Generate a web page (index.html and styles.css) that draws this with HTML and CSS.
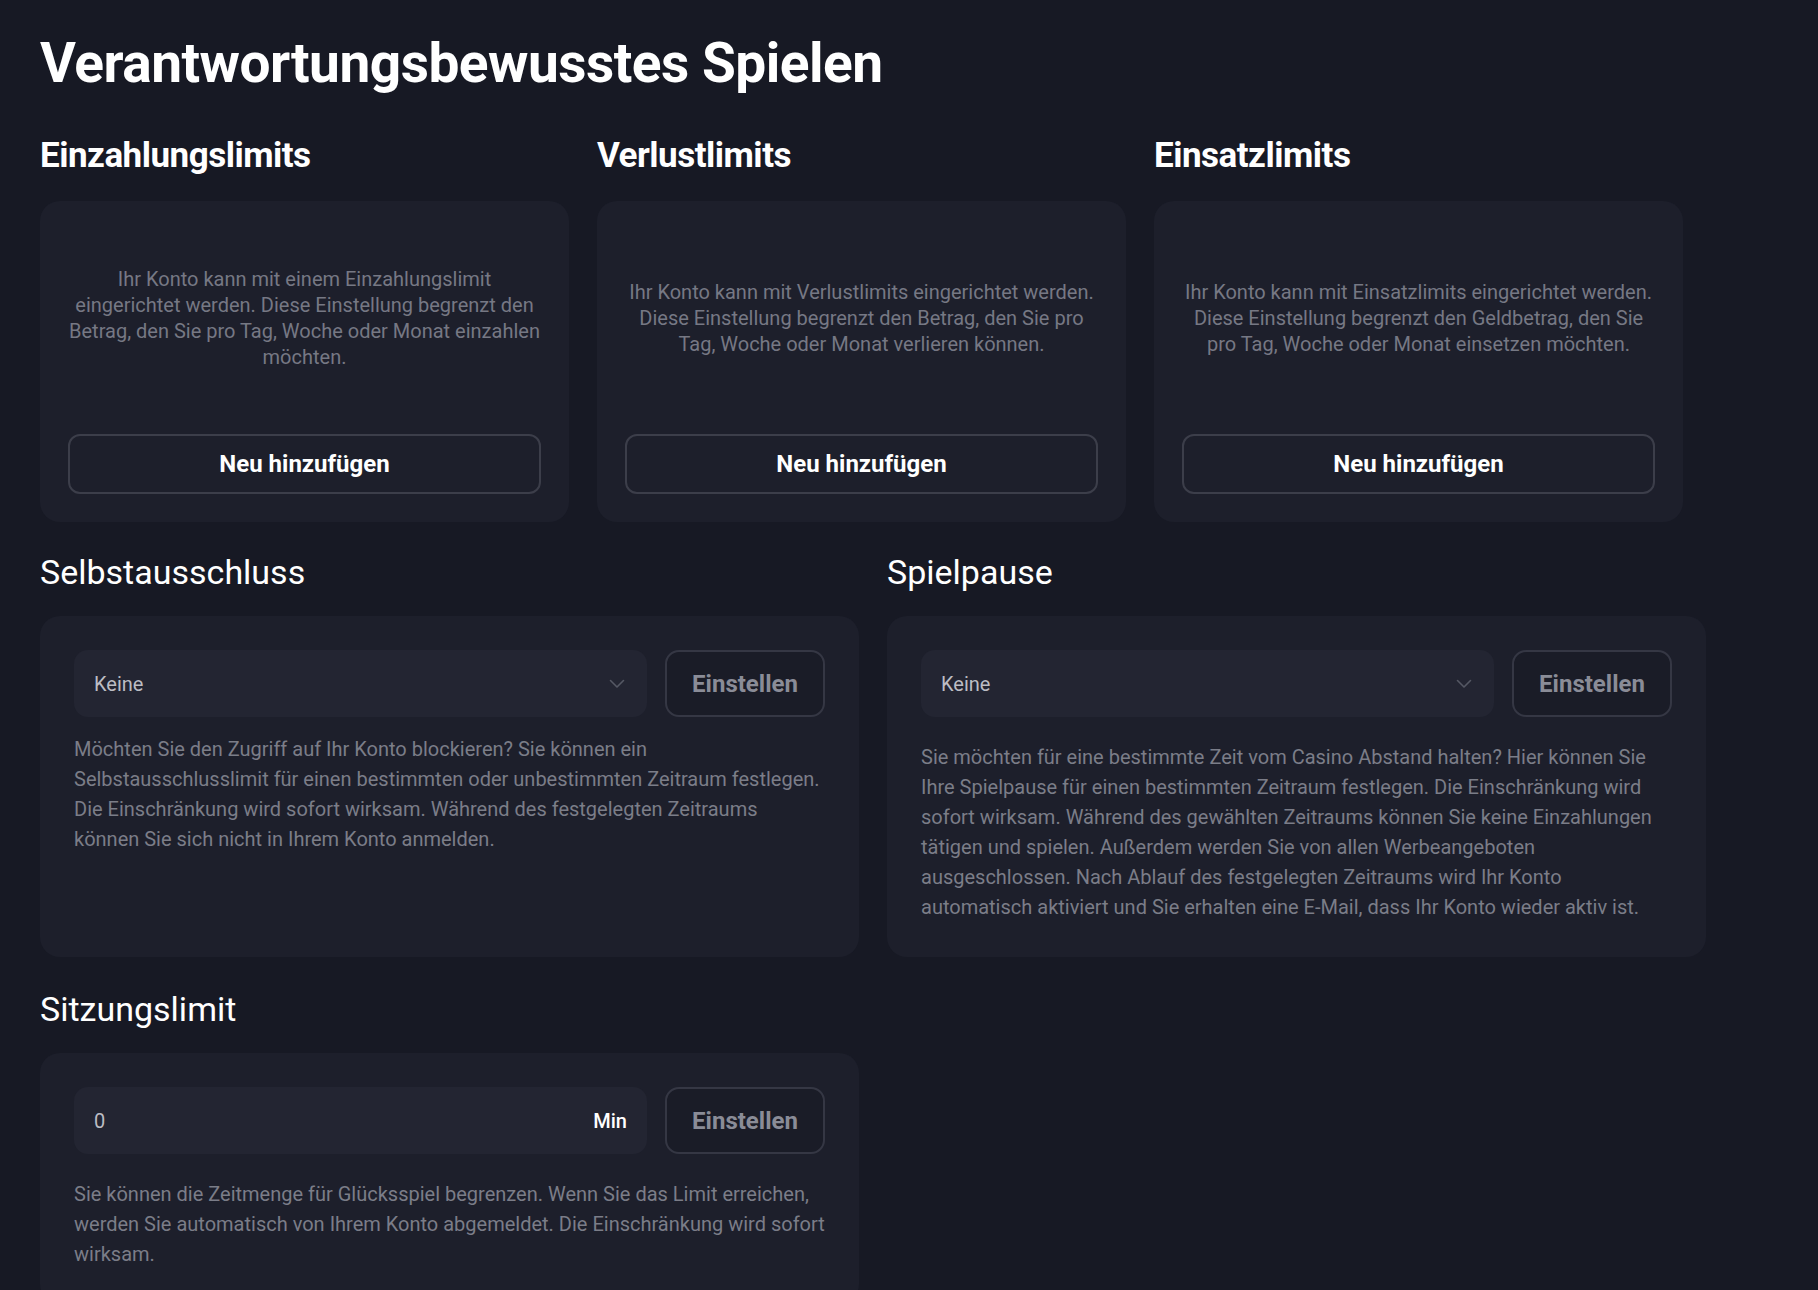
FILE: index.html
```html
<!DOCTYPE html>
<html lang="de">

<head>
    <meta charset="utf-8">
    <title>Verantwortungsbewusstes Spielen</title>
    <link rel="stylesheet" href="styles.css">
</head>

<body>
    <main class="page">
        <h1 class="page-title">Verantwortungsbewusstes Spielen</h1>

        <div class="limits-row">
            <section class="limit">
                <h2 class="limit-title">Einzahlungslimits</h2>
                <div class="limit-card">
                    <div class="limit-text">
                        <p>Ihr Konto kann mit einem Einzahlungslimit eingerichtet werden. Diese Einstellung begrenzt den Betrag, den Sie pro Tag, Woche oder Monat einzahlen möchten.</p>
                    </div>
                    <button class="btn-add">Neu hinzufügen</button>
                </div>
            </section>

            <section class="limit">
                <h2 class="limit-title">Verlustlimits</h2>
                <div class="limit-card">
                    <div class="limit-text">
                        <p>Ihr Konto kann mit Verlustlimits eingerichtet werden. Diese Einstellung begrenzt den Betrag, den Sie pro Tag, Woche oder Monat verlieren können.</p>
                    </div>
                    <button class="btn-add">Neu hinzufügen</button>
                </div>
            </section>

            <section class="limit">
                <h2 class="limit-title">Einsatzlimits</h2>
                <div class="limit-card">
                    <div class="limit-text">
                        <p>Ihr Konto kann mit Einsatzlimits eingerichtet werden. Diese Einstellung begrenzt den Geldbetrag, den Sie pro Tag, Woche oder Monat einsetzen möchten.</p>
                    </div>
                    <button class="btn-add">Neu hinzufügen</button>
                </div>
            </section>
        </div>

        <div class="settings-row">
            <section class="setting">
                <h2 class="setting-title">Selbstausschluss</h2>
                <div class="setting-card">
                    <div class="setting-controls">
                        <div class="field select">
                            <span class="field-value">Keine</span>
                            <svg class="chevron" width="16" height="10" viewBox="0 0 16 10">
                                <path d="M1.5 1.5 L8 8 L14.5 1.5" fill="none" stroke="#555864" stroke-width="1.6" stroke-linecap="round" stroke-linejoin="round"/>
                            </svg>
                        </div>
                        <button class="btn-set">Einstellen</button>
                    </div>
                    <p class="setting-text">Möchten Sie den Zugriff auf Ihr Konto blockieren? Sie können ein Selbstausschlusslimit für einen bestimmten oder unbestimmten Zeitraum festlegen. Die Einschränkung wird sofort wirksam. Während des festgelegten Zeitraums können Sie sich nicht in Ihrem Konto anmelden.</p>
                </div>
            </section>

            <section class="setting">
                <h2 class="setting-title">Spielpause</h2>
                <div class="setting-card">
                    <div class="setting-controls">
                        <div class="field select">
                            <span class="field-value">Keine</span>
                            <svg class="chevron" width="16" height="10" viewBox="0 0 16 10">
                                <path d="M1.5 1.5 L8 8 L14.5 1.5" fill="none" stroke="#555864" stroke-width="1.6" stroke-linecap="round" stroke-linejoin="round"/>
                            </svg>
                        </div>
                        <button class="btn-set">Einstellen</button>
                    </div>
                    <p class="setting-text spaced">Sie möchten für eine bestimmte Zeit vom Casino Abstand halten? Hier können Sie Ihre Spielpause für einen bestimmten Zeitraum festlegen. Die Einschränkung wird sofort wirksam. Während des gewählten Zeitraums können Sie keine Einzahlungen tätigen und spielen. Außerdem werden Sie von allen Werbeangeboten ausgeschlossen. Nach Ablauf des festgelegten Zeitraums wird Ihr Konto automatisch aktiviert und Sie erhalten eine E-Mail, dass Ihr Konto wieder aktiv ist.</p>
                </div>
            </section>
        </div>

        <div class="settings-row">
            <section class="setting">
                <h2 class="setting-title">Sitzungslimit</h2>
                <div class="setting-card">
                    <div class="setting-controls">
                        <div class="field">
                            <span class="field-value">0</span>
                            <span class="field-unit">Min</span>
                        </div>
                        <button class="btn-set">Einstellen</button>
                    </div>
                    <p class="setting-text spaced">Sie können die Zeitmenge für Glücksspiel begrenzen. Wenn Sie das Limit erreichen, werden Sie automatisch von Ihrem Konto abgemeldet. Die Einschränkung wird sofort wirksam.</p>
                </div>
            </section>
        </div>
    </main>
</body>
</html>
```

FILE: styles.css
```css
body {
    margin: 0;
    background-color: #171924;
    color: #fff;
    font-family: Roboto, "Noto Sans", sans-serif;
}

.page {
    width: 1666px;
    padding: 30px 0 60px 40px;
}

.page-title {
    margin: 0;
    font-size: 55px;
    line-height: 66px;
    font-weight: 700;
    letter-spacing: -0.5px;
}

/* top row: three limit cards */

.limits-row {
    display: grid;
    grid-template-columns: repeat(3, 529px);
    column-gap: 28px;
    margin-top: 39px;
}

.limit-title {
    margin: 0 0 24px;
    font-size: 35px;
    line-height: 42px;
    font-weight: 700;
    letter-spacing: -0.5px;
}

.limit-card {
    display: flex;
    flex-direction: column;
    gap: 27px;
    padding: 27px 28px 28px;
    background-color: #1d1f2b;
    border-radius: 20px;
}

.limit-text {
    display: flex;
    align-items: center;
    justify-content: center;
    min-height: 179px;
}

.limit-text p {
    margin: 0;
    font-size: 20px;
    line-height: 26px;
    color: #767884;
    text-align: center;
}

.btn-add {
    height: 60px;
    border: 2px solid #3c3e4a;
    border-radius: 12px;
    background: transparent;
    color: #fff;
    font-family: inherit;
    font-size: 24px;
    font-weight: 700;
    cursor: pointer;
}

/* lower rows: select / input settings */

.settings-row {
    display: grid;
    grid-template-columns: 1fr 1fr;
    column-gap: 28px;
    margin-top: 32px;
}

.limits-row + .settings-row {
    margin-top: 30px;
}

.setting {
    display: flex;
    flex-direction: column;
}

.setting-title {
    margin: 0 0 24px;
    font-size: 34px;
    line-height: 40px;
    font-weight: 400;
}

.setting-card {
    flex: 1;
    padding: 34px 34px 35px;
    background-color: #1d1f2b;
    border-radius: 20px;
}

.setting-controls {
    display: flex;
    gap: 18px;
    height: 67px;
}

.field {
    flex: 1;
    display: flex;
    align-items: center;
    justify-content: space-between;
    padding: 0 20px;
    background-color: #232532;
    border-radius: 14px;
    font-size: 20px;
}

.field-value {
    color: #bcbdc4;
}

.select {
    padding-right: 22px;
}

.field-unit {
    color: #fff;
    font-weight: 500;
}

.btn-set {
    width: 160px;
    border: 2px solid #353744;
    border-radius: 14px;
    background-color: #1a1c27;
    color: #8a8c97;
    font-family: inherit;
    font-size: 24px;
    font-weight: 700;
    cursor: pointer;
}

.setting-text {
    margin: 17px -2px 0 0;
    font-size: 20px;
    line-height: 30px;
    color: #7b7d88;
}

.setting-text.spaced {
    margin-top: 25px;
}
```
